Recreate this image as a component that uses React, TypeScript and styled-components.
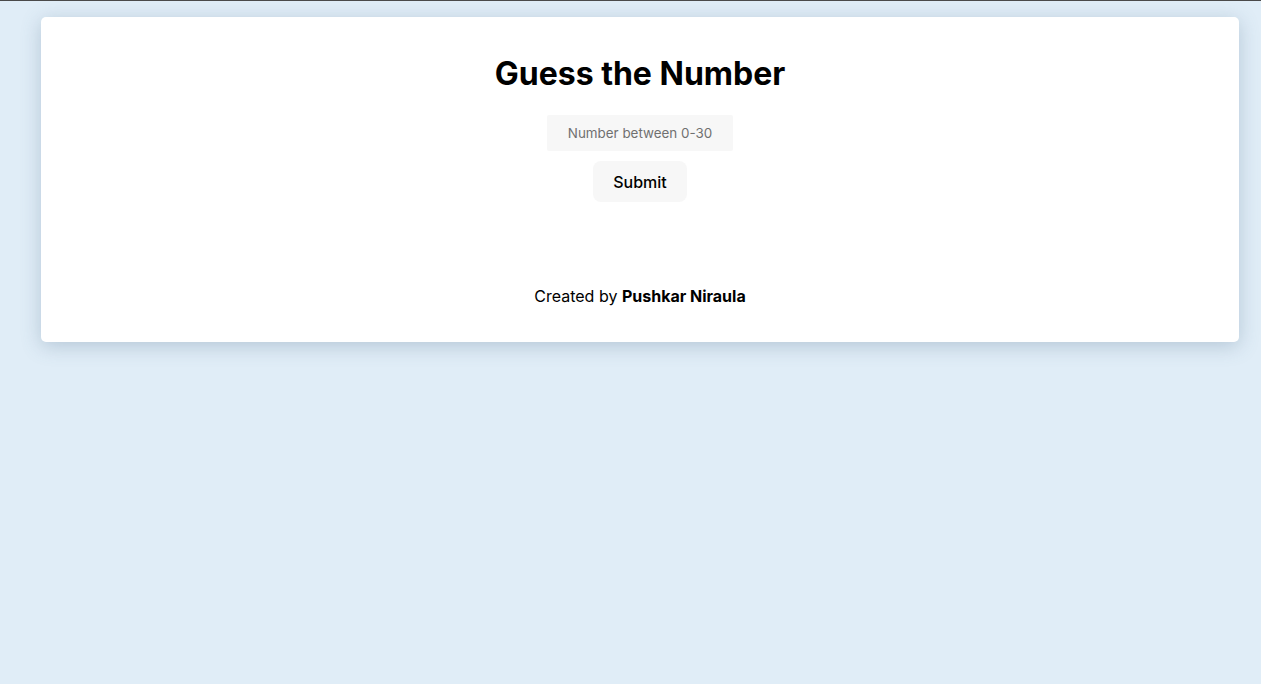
import React from "react";
import styled, { createGlobalStyle } from "styled-components";

const Global = createGlobalStyle`
  html, body { margin: 0; padding: 0; }
  body {
    background: #e0edf7;
    border-top: 1px solid #4a4a4a;
    font-family: Inter, "Noto Sans", sans-serif;
    color: #000;
    min-height: 683px;
  }
`;

const Card = styled.main`
  margin: 16px 22px 0 41px;
  background: #fff;
  border-radius: 5px;
  box-shadow: 0 4px 20px rgba(80, 110, 140, 0.3);
  padding: 37px 0 36px;
  display: flex;
  flex-direction: column;
  align-items: center;
`;

const Title = styled.h1`
  margin: 0 0 22px;
  font-size: 32px;
  font-weight: 700;
  line-height: 39px;
`;

const Input = styled.input`
  width: 186px;
  height: 36px;
  box-sizing: border-box;
  border: none;
  outline: none;
  background: #f7f7f7;
  border-radius: 2px;
  text-align: center;
  font-family: Inter, sans-serif;
  font-size: 13.4px;
  &::placeholder { color: #707070; }
`;

const Button = styled.button`
  margin-top: 10px;
  width: 94px;
  height: 41px;
  border: none;
  border-radius: 8px;
  background: #f7f7f7;
  font-family: Inter, sans-serif;
  font-size: 16px;
  font-weight: 500;
  color: #000;
`;

const Footer = styled.p`
  margin: 84px 0 0;
  font-size: 16px;
  line-height: 20px;
`;

const Name = styled.strong`
  font-weight: 700;
`;

export default function App() {
  return (
    <>
      <Global />
      <Card>
        <Title>Guess the Number</Title>
        <Input placeholder="Number between 0-30" />
        <Button>Submit</Button>
        <Footer>
          Created by <Name>Pushkar Niraula</Name>
        </Footer>
      </Card>
    </>
  );
}
